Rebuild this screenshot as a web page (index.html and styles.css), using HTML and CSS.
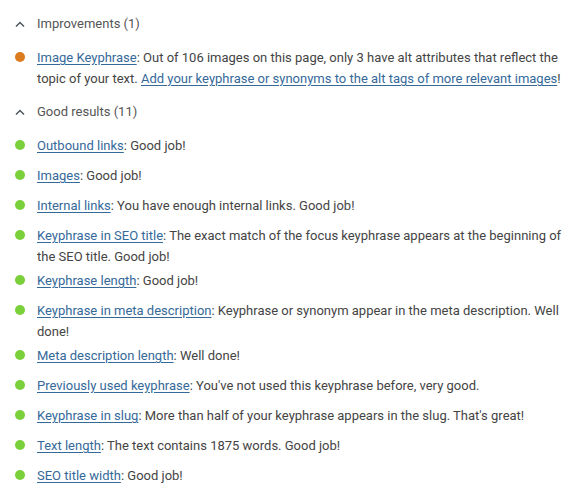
FILE: index.html
```html
<!DOCTYPE html>
<html lang="en">
<head>
    <meta charset="UTF-8">
    <meta name="viewport" content="width=device-width, initial-scale=1.0">
    <title>SEO analysis</title>
    <link rel="stylesheet" href="styles.css">
</head>
<body>
    <div class="results">
        <div class="section">
            <div class="section-head">
                <svg class="chevron" width="10" height="6" viewBox="0 0 10 6"><polyline points="1,5.5 5,1.5 9,5.5" fill="none" stroke="#50575e" stroke-width="1.5"></polyline></svg>
                <span>Improvements (1)</span>
            </div>
            <ul class="result-list">
                <li><span class="bullet orange"></span><p><a href="#">Image Keyphrase</a>: Out of 106 images on this page, only 3 have alt attributes that reflect the topic of your text. <a href="#">Add your keyphrase or synonyms to the alt tags of more relevant images</a>!</p></li>
            </ul>
        </div>
        <div class="section">
            <div class="section-head">
                <svg class="chevron" width="10" height="6" viewBox="0 0 10 6"><polyline points="1,5.5 5,1.5 9,5.5" fill="none" stroke="#50575e" stroke-width="1.5"></polyline></svg>
                <span>Good results (11)</span>
            </div>
            <ul class="result-list">
                <li><span class="bullet green"></span><p><a href="#">Outbound links</a>: Good job!</p></li>
                <li><span class="bullet green"></span><p><a href="#">Images</a>: Good job!</p></li>
                <li><span class="bullet green"></span><p><a href="#">Internal links</a>: You have enough internal links. Good job!</p></li>
                <li><span class="bullet green"></span><p><a href="#">Keyphrase in SEO title</a>: The exact match of the focus keyphrase appears at the beginning of the SEO title. Good job!</p></li>
                <li><span class="bullet green"></span><p><a href="#">Keyphrase length</a>: Good job!</p></li>
                <li><span class="bullet green"></span><p><a href="#">Keyphrase in meta description</a>: Keyphrase or synonym appear in the meta description. Well done!</p></li>
                <li><span class="bullet green"></span><p><a href="#">Meta description length</a>: Well done!</p></li>
                <li><span class="bullet green"></span><p><a href="#">Previously used keyphrase</a>: You've not used this keyphrase before, very good.</p></li>
                <li><span class="bullet green"></span><p><a href="#">Keyphrase in slug</a>: More than half of your keyphrase appears in the slug. That's great!</p></li>
                <li><span class="bullet green"></span><p><a href="#">Text length</a>: The text contains 1875 words. Good job!</p></li>
                <li><span class="bullet green"></span><p><a href="#">SEO title width</a>: Good job!</p></li>
            </ul>
        </div>
    </div>
</body>
</html>
```

FILE: styles.css
```css
body {
    margin: 0;
    background-color: #fff;
    font-family: "Segoe UI", Roboto, "Liberation Sans", sans-serif;
    font-size: 13px;
    line-height: 21px;
    color: #444;
}
.results { padding: 4px 6px 0 15px; }
.section-head { display: flex; align-items: center; gap: 12px; padding: 9px 0 13px; color: #555; }
.chevron { flex: none; }
.result-list { list-style: none; margin: 0; padding: 0; }
.result-list li { display: flex; align-items: flex-start; gap: 12px; min-height: 27px; margin-bottom: 3px; }
.result-list p { margin: 0; }
.bullet { flex: none; width: 10px; height: 10px; border-radius: 50%; margin-top: 5px; }
.bullet.orange { background-color: #dc7a1e; }
.bullet.green { background-color: #7ad03a; }
a { color: #35699a; text-decoration: underline; text-underline-offset: 2px; }
```
